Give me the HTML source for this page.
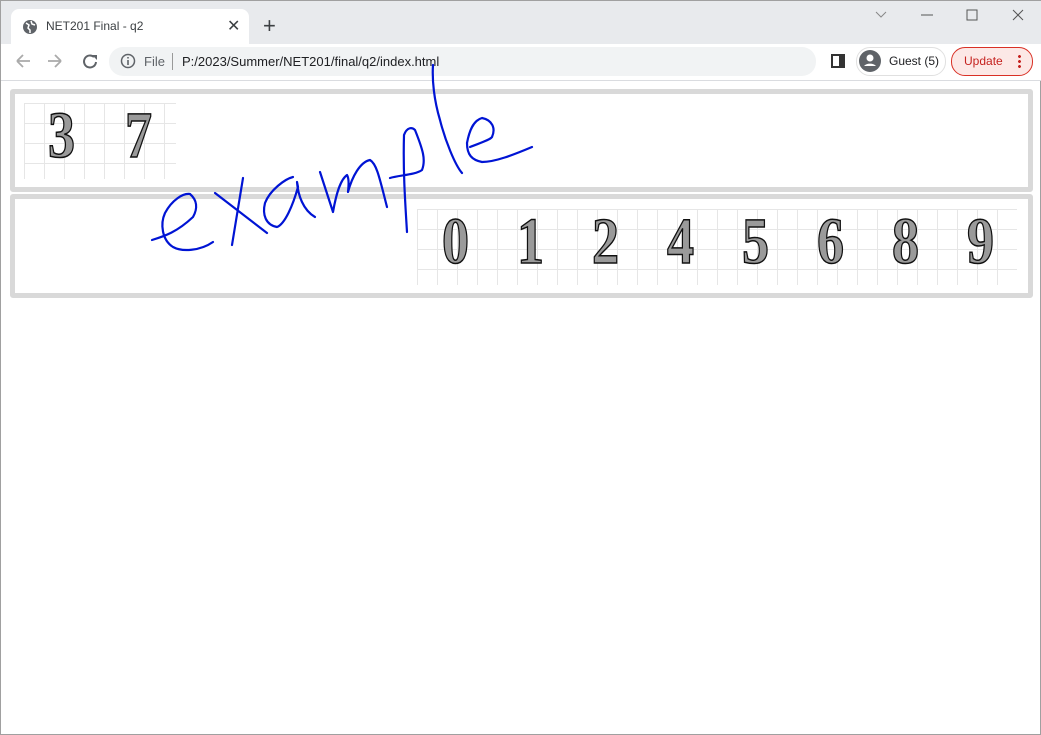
<!DOCTYPE html>
<html><head><meta charset="utf-8"><style>
*{margin:0;padding:0;box-sizing:border-box}
body{width:1041px;height:735px;overflow:hidden;background:#fff;font-family:"Liberation Sans",sans-serif;position:relative;border:1px solid #a0a0a0}
.top{position:absolute;left:0;top:0;width:1041px;height:43px;background:#e8eaed}
.tab{position:absolute;left:10px;top:8px;width:238px;height:35px;background:#fff;border-radius:8px 8px 0 0}
.t{position:absolute;font-size:12px;color:#3c4043}
.tb{position:absolute;left:0;top:43px;width:1041px;height:37px;background:#fff;border-bottom:1px solid #dadce0}
.omni{position:absolute;left:108px;top:46px;width:707px;height:29px;background:#f1f3f4;border-radius:14px}
.box{position:absolute;left:9px;width:1023px;border:5px solid #d9d9d9;border-radius:3px;background:#fff}
.grid{position:absolute;background-color:#fff;background-image:linear-gradient(#e6e6e6 1px,transparent 1px),linear-gradient(90deg,#e6e6e6 1px,transparent 1px);background-size:20px 20px;background-position:0 0}
.d{position:absolute;width:75px;text-align:center;font-family:"Liberation Serif",serif;font-weight:bold;font-size:66px;line-height:62px;color:#9a9a9a;-webkit-text-stroke:1.5px #111;transform:scaleX(0.82)}
</style></head><body>
<div class="top"></div>
<div class="tab"></div>
<svg style="position:absolute;left:21px;top:18px" width="16" height="16" viewBox="0 0 16 16"><circle cx="8" cy="8" r="7" fill="#5f6368"/><path d="M4 4l3 2-1 3 2 2v3M9 2l1 3 3 1" stroke="#fff" stroke-width="1.5" fill="none"/></svg>
<div class="t" style="left:45px;top:18px">NET201 Final - q2</div>
<div class="t" style="left:226px;top:15px;font-size:16px">✕</div>
<div class="t" style="left:262px;top:12px;font-size:22px">+</div>
<svg style="position:absolute;left:870px;top:7px" width="160" height="16"><path d="M5 4l5 5 5-5" stroke="#888" fill="none"/><path d="M50 7h12" stroke="#555"/><rect x="96" y="2" width="10" height="10" stroke="#555" fill="none"/><path d="M142 2l10 10M152 2l-10 10" stroke="#555"/></svg>
<div class="tb"></div>
<svg style="position:absolute;left:12px;top:51px" width="90" height="18"><path d="M4 9h13M4 9l6-6M4 9l6 6" stroke="#aaa" stroke-width="1.8" fill="none"/><path d="M35 9h13M48 9l-6-6M48 9l-6 6" stroke="#aaa" stroke-width="1.8" fill="none"/><path d="M81 5a6 6 0 1 0 2 5" stroke="#5f6368" stroke-width="2" fill="none"/><path d="M79 3h5v5z" fill="#5f6368"/></svg>
<div class="omni"></div>
<svg style="position:absolute;left:119px;top:52px" width="16" height="16"><circle cx="8" cy="8" r="6.5" stroke="#5f6368" stroke-width="1.5" fill="none"/><path d="M8 7v5M8 4v1.5" stroke="#5f6368" stroke-width="1.6"/></svg>
<div class="t" style="left:143px;top:53px;font-size:13px;color:#5f6368">File</div>
<div style="position:absolute;left:171px;top:52px;width:1px;height:17px;background:#999"></div>
<div class="t" style="left:181px;top:53px;font-size:13px;color:#202124">P:/2023/Summer/NET201/final/q2/index.html</div>
<div style="position:absolute;left:830px;top:53px;width:14px;height:14px;border:2px solid #333;border-right-width:6px"></div>
<div style="position:absolute;left:855px;top:46px;width:90px;height:29px;border:1px solid #e0e0e0;border-radius:14px"></div>
<svg style="position:absolute;left:858px;top:49px" width="22" height="22"><circle cx="11" cy="11" r="11" fill="#5f6368"/><circle cx="11" cy="8" r="3.5" fill="#fff"/><path d="M5 16a7 5 0 0 1 12 0" fill="#fff"/></svg>
<div class="t" style="left:888px;top:53px;color:#202124">Guest (5)</div>
<div style="position:absolute;left:950px;top:46px;width:82px;height:29px;border:1px solid #d93025;border-radius:14px;background:#fce8e6"></div>
<div class="t" style="left:963px;top:53px;color:#c5221f">Update</div>
<div style="position:absolute;left:1017px;top:53px;width:3px;height:14px;background:radial-gradient(circle,#c5221f 1.3px,transparent 1.6px) 0 0/3px 5px"></div>

<div class="box" style="top:88px;height:103px"></div>
<div class="box" style="top:193px;height:104px"></div>
<div class="grid" style="left:23px;top:102px;width:152px;height:76px"></div>
<div class="d" style="left:23px;top:104px">3</div>
<div class="d" style="left:100px;top:104px">7</div>
<div class="grid" style="left:416px;top:208px;width:600px;height:76px"></div>
<div class="d" style="left:417px;top:210px">0</div>
<div class="d" style="left:492px;top:210px">1</div>
<div class="d" style="left:567px;top:210px">2</div>
<div class="d" style="left:642px;top:210px">4</div>
<div class="d" style="left:717px;top:210px">5</div>
<div class="d" style="left:792px;top:210px">6</div>
<div class="d" style="left:867px;top:210px">8</div>
<div class="d" style="left:942px;top:210px">9</div>

<svg style="position:absolute;left:-1px;top:-1px" width="1041" height="735" fill="none" stroke="#0014d4" stroke-width="2.2" stroke-linecap="round" stroke-linejoin="round">
<path d="M152 240C165 236 177 232 193 217C198 208 197 200 190 194C183 193 172 200 165 213C160 224 162 240 173 247C182 252 200 251 213 242"/>
<path d="M215 193L267 233M243 178L232 245"/>
<path d="M293 177C285 179 270 190 265 203C262 215 266 225 277 227C285 224 293 205 298 187L297 182C298 195 303 210 315 217"/>
<path d="M320 172L333 212C336 195 340 180 347 175C350 180 348 190 348 192C352 177 360 162 370 160C377 164 380 180 387 207"/>
<path d="M390 178C400 175 415 175 422 170C426 160 423 150 415 130C412 127 407 127 404 135C403 170 405 200 407 232"/>
<path d="M433 65C432 80 434 100 440 120C445 140 455 165 462 173"/>
<path d="M470 147C480 143 490 140 492 137C496 128 492 120 482 118C475 120 470 127 467 143C467 155 472 160 482 162C495 162 513 155 532 147"/>
</svg>
</body></html>
